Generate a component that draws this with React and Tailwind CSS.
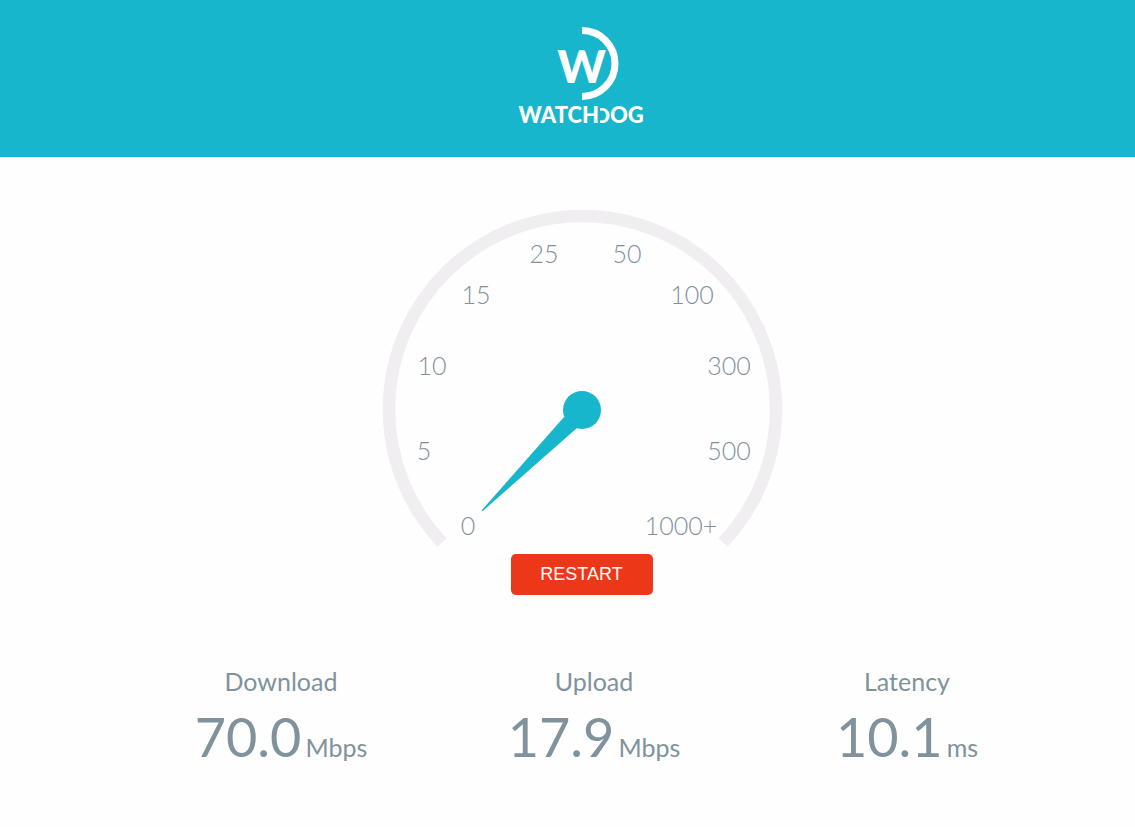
const LABELS = [
  { text: '0', x: 86, y: 325 },
  { text: '5', x: 42, y: 250 },
  { text: '10', x: 50, y: 165 },
  { text: '15', x: 94, y: 94 },
  { text: '25', x: 162, y: 53 },
  { text: '50', x: 245, y: 53 },
  { text: '100', x: 310, y: 94 },
  { text: '300', x: 347, y: 165 },
  { text: '500', x: 347, y: 250 },
  { text: '1000+', x: 299, y: 325 },
];

const STATS = [
  { name: 'Download', value: '70.0', unit: 'Mbps' },
  { name: 'Upload', value: '17.9', unit: 'Mbps' },
  { name: 'Latency', value: '10.1', unit: 'ms' },
];

function Logo() {
  return (
    <svg viewBox="0 0 140 108" className="h-[108px] w-[140px]" role="img" aria-label="Watchdog">
      <path d="M70 5.500 A33 33 0 0 1 70 71.500" fill="none" stroke="#fff" strokeWidth="7" />
      <text x="69.500" y="57.500" textAnchor="middle" className="fill-white text-[46px] font-black">W</text>
      {/* The D is open on its left side: its stem is covered, then the neighbours are drawn */}
      <text x="98" y="98" textAnchor="end" className="fill-white text-[21px] font-black">D</text>
      <rect x="78" y="80" width="10" height="20" fill="#17b6cc" />
      <text x="87" y="98" textAnchor="end" className="fill-white text-[22px] font-black">WATCH</text>
      <text x="98" y="98" className="fill-white text-[22px] font-black">OG</text>
    </svg>
  );
}

function Gauge() {
  return (
    <svg viewBox="0 0 400 344" className="w-full max-w-[400px]" role="img" aria-label="Speed gauge">
      <path d="M60 332.500 A193.500 193.500 0 1 1 341 332.500" fill="none" stroke="#f0eef1" strokeWidth="12.500" />
      <path d="M99.500 300.500 L100.500 301.200 L195 218 L182 207 Z" fill="#17b6cc" />
      <circle cx="200" cy="200" r="19" fill="#17b6cc" />
      {LABELS.map((l) => (
        <text key={l.text} x={l.x} y={l.y} textAnchor="middle" className="fill-[#7f919b] text-[25px] font-light">
          {l.text}
        </text>
      ))}
    </svg>
  );
}

export default function App() {
  return (
    <div className="min-h-screen bg-[#fefefe] font-['Lato',sans-serif] text-[#80929c]">
      <header className="flex justify-center bg-[#17b6cc] pt-[25px] pb-6 pl-7">
        <Logo />
      </header>
      <main className="pb-12">
        <section className="flex flex-col items-center pt-[53px] pl-7">
          <Gauge />
          <button
            type="button"
            className="h-[41px] w-[142px] rounded-[5px] bg-[#ed3719] font-['Liberation_Sans',sans-serif] text-[18px] text-white"
          >
            RESTART
          </button>
        </section>
        <dl className="mx-auto mt-[68px] grid max-w-[992px] grid-cols-3 pl-[53px] text-center">
          {STATS.map((s) => (
            <div key={s.name}>
              <dt className="text-[25px] leading-9">{s.name}</dt>
              <dd className="flex items-baseline justify-center gap-1 text-[25px] leading-[76px]">
                <span className="text-[54px]">{s.value}</span>
                <span>{s.unit}</span>
              </dd>
            </div>
          ))}
        </dl>
      </main>
    </div>
  );
}
